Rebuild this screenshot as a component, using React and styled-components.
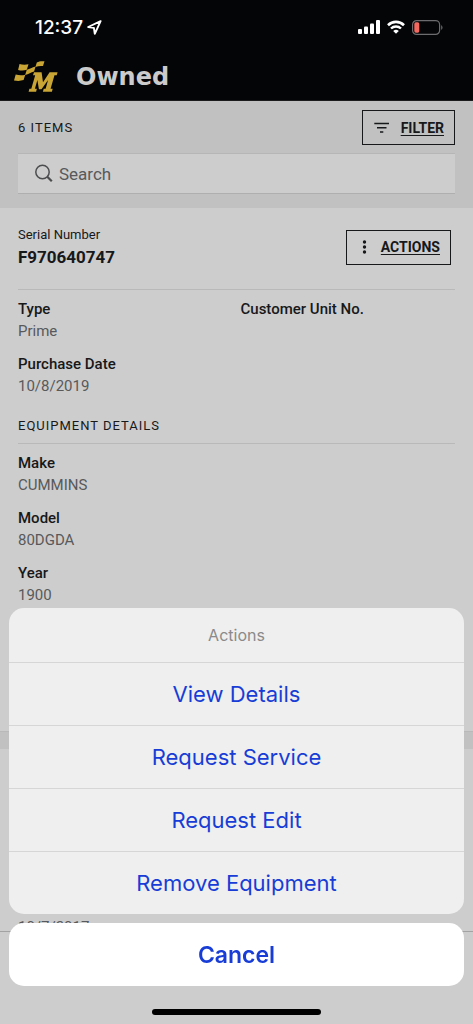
import styled, { createGlobalStyle } from "styled-components";

import React from "react";

const GlobalStyle = createGlobalStyle`
  *, *::before, *::after {
    box-sizing: border-box;
  }
  body {
    margin: 0;
    background-color: #cdcdcd;
    color: #17181a;
    font-family: Roboto, "Liberation Sans", sans-serif;
  }
  button, input {
    font-family: inherit;
    color: inherit;
  }
`;

const Screen = styled.div`
  height: 100vh;
  display: flex;
  flex-direction: column;
  overflow: hidden;
`;

const Header = styled.header`
  flex: none;
  background-color: #040507;
  border-bottom: 1px solid #1b1b1d;
`;

const StatusBar = styled.div`
  display: flex;
  justify-content: space-between;
  align-items: center;
  height: 54px;
  padding: 0 30px 0 35px;
  color: white;
`;

const Clock = styled.div`
  display: flex;
  align-items: center;
  gap: 4px;
  font-family: Inter, sans-serif;
  font-size: 19px;
  font-weight: 500;
`;

const Indicators = styled.div`
  display: flex;
  align-items: center;
  gap: 7px;
`;

const TitleBar = styled.div`
  display: flex;
  align-items: center;
  gap: 18px;
  height: 46px;
  padding: 0 14px;
`;

const PageTitle = styled.h1`
  margin: 0;
  color: #cbcbcb;
  font-family: "DejaVu Sans", sans-serif;
  font-size: 24px;
  font-weight: bold;
  line-height: 24px;
`;

const Content = styled.main`
  flex: 1;
  min-height: 0;
  overflow: hidden;
`;

const Toolbar = styled.section`
  background-color: #c1c1c1;
  padding: 9px 18px 14px;
`;

const ToolbarRow = styled.div`
  display: flex;
  justify-content: space-between;
  align-items: center;
  margin-bottom: 8px;
`;

const Caption = styled.h2`
  margin: 0;
  font-size: 13px;
  font-weight: 400;
  line-height: 20px;
  letter-spacing: 1px;
`;

const OutlineButton = styled.button`
  display: flex;
  align-items: center;
  height: 35px;
  padding: 0 10px;
  gap: 12px;
  background: none;
  border: 1px solid #17181a;
  border-radius: 0;
  font-size: 14px;
  font-weight: 700;
  text-decoration: underline;
  text-underline-offset: 2px;
`;

const SearchBox = styled.label`
  display: flex;
  align-items: center;
  gap: 5px;
  height: 41px;
  padding: 0 16px;
  background-color: #cdcdcd;
  border-top: 1px solid #b6b6b6;
  border-bottom: 1px solid #afafaf;
`;

const SearchInput = styled.input`
  flex: 1;
  min-width: 0;
  padding: 0;
  background: none;
  border: none;
  font-size: 17px;
  &::placeholder {
    color: #58595b;
    opacity: 1;
  }
`;

const Card = styled.article`
  min-height: 523px;
  padding: 16px 18px 0;
`;

const Divider = styled.div`
  height: 18px;
  background-color: #c1c1c1;
  border-top: 1px solid #b9b9b9;
`;

const CardHeader = styled.div`
  display: flex;
  justify-content: space-between;
  align-items: center;
  padding: 1px 4px 20px 0;
  border-bottom: 1px solid #b9b9b9;
`;

const SerialLabel = styled.div`
  font-size: 13px;
  line-height: 20px;
`;

const SerialNumber = styled.div`
  min-height: 24px;
  font-size: 17px;
  font-weight: 700;
  line-height: 24px;
`;

const FieldGrid = styled.dl`
  display: grid;
  grid-template-columns: 1fr 1fr;
  column-gap: 8px;
  row-gap: 11px;
  margin: 0;
  padding: 8px 0 19px;
`;

const Field = styled.div`
  grid-column: ${(props) => props.$column};
`;

const FieldName = styled.dt`
  font-size: 15px;
  font-weight: 500;
  line-height: 22px;
`;

const FieldValue = styled.dd`
  margin: 0;
  color: #58595b;
  font-size: 15px;
  line-height: 22px;
`;

const SectionTitle = styled.div`
  padding-bottom: 7px;
  border-bottom: 1px solid #b9b9b9;
`;

const TabBar = styled.footer`
  flex: none;
  height: 93px;
  border-top: 1px solid #a3a3a3;
`;

const SheetLayer = styled.div`
  position: fixed;
  left: 0;
  right: 0;
  bottom: 0;
  padding: 0 9px 9px;
  font-family: Inter, "Liberation Sans", sans-serif;
`;

const Sheet = styled.div`
  overflow: hidden;
  margin-bottom: 9px;
  border-radius: 15px;
  background-color: #efefef;
`;

const SheetTitle = styled.h2`
  margin: 0;
  color: #8a8a8a;
  font-size: 16px;
  font-weight: 400;
  line-height: 54px;
  text-align: center;
`;

const SheetButton = styled.button`
  display: block;
  width: 100%;
  height: 63px;
  padding: 0;
  background-color: ${(props) => (props.$cancel ? "white" : "transparent")};
  border: none;
  border-top: ${(props) => (props.$cancel ? "none" : "1px solid #d6d6d6")};
  border-radius: ${(props) => (props.$cancel ? "15px" : "0")};
  color: #173dd6;
  font-size: ${(props) => (props.$cancel ? "23px" : "22px")};
  font-weight: ${(props) => (props.$cancel ? 600 : 400)};
`;

const HomeIndicator = styled.div`
  width: 169px;
  height: 6px;
  margin: 23px auto 0;
  border-radius: 3px;
  background-color: black;
`;

function LocationIcon() {
  return (
    <svg width="15" height="15" viewBox="0 0 15 15" fill="none">
      <path
        d="M13.6 1.2 1.2 7l5.7.9.9 5.9Z"
        stroke="white"
        strokeWidth="1.9"
        strokeLinejoin="round"
      />
    </svg>
  );
}

function SignalIcon() {
  return (
    <svg width="22" height="14" viewBox="0 0 22 14" fill="white">
      <rect x="0" y="9" width="4" height="5" rx="1" />
      <rect x="6" y="6.5" width="4" height="7.5" rx="1" />
      <rect x="12" y="3.5" width="4" height="10.5" rx="1" />
      <rect x="18" y="0" width="4" height="14" rx="1" />
    </svg>
  );
}

function WifiIcon() {
  return (
    <svg width="18" height="14" viewBox="0 0 18 14" fill="none">
      <path d="M1 5.200a11.400 11.400 0 0 1 16 0" stroke="white" strokeWidth="2.600" />
      <path d="M4 8.500a7.100 7.100 0 0 1 10 0" stroke="white" strokeWidth="2.400" />
      <path d="M9 13.800 6.200 11a4 4 0 0 1 5.600 0Z" fill="white" />
    </svg>
  );
}

function BatteryIcon() {
  return (
    <svg width="31" height="15" viewBox="0 0 31 15" fill="none">
      <rect x=".6" y=".6" width="27" height="13.8" rx="4" stroke="#6c6c6e" strokeWidth="1.2" />
      <path d="M29.2 5.2c1.7.7 1.7 3.9 0 4.6Z" fill="#6c6c6e" />
      <rect x="2.3" y="2.3" width="5" height="10.4" rx="1.6" fill="#f2695f" />
    </svg>
  );
}

// checkered flag (four wavy squares) over the slab M
function Logo() {
  return (
    <svg width="44" height="32" viewBox="0 0 44 32" fill="#c9a535">
      <path d="M5.500 3c3 .9 6 .9 9 .3L12.800 8.800c-3 .9-5.800.9-8.700.1Z" />
      <path d="M12.800 8.800C15.800 8.300 18 6.500 21.600 5.600l-1.500 4.900c-3.200.9-5.400 2.700-9 3.500Z" />
      <path d="M22.800 1.400C25.400 0 28 0 30.500.3L29 5c-2.500-.3-5-.1-7.600 1.100Z" />
      <path d="M1.700 13.500c3.200.9 6.400 1 9.600.2l-1.700 5.400c-3.200 1-6.400 1-9.600.3Z" />
      <path d="M20 11.200h7.600l1.400 10L35.600 11.200H43.600l-.9 3h-2.200l-3.900 13.500h2.100l-.8 3h-9l.8-3h1.900l2.500-8.700-6.600 9.300h-2.600l-1.500-9.400-2.500 8.800h2l-.8 3h-7.500l.8-3h1.900l3.900-13.500H19Z" />
    </svg>
  );
}

function SearchIcon() {
  return (
    <svg width="20" height="20" viewBox="0 0 20 20" fill="none" stroke="#4c4d4f">
      <circle cx="8.500" cy="8" r="6.700" strokeWidth="1.500" />
      <path d="m13.300 12.800 4.500 4.500" strokeWidth="2.200" />
    </svg>
  );
}

function FilterIcon() {
  return (
    <svg width="16" height="12" viewBox="0 0 16 12" stroke="#17181a" strokeWidth="1.500">
      <path d="M1.300 1.500H16M4 5.700h9.500M7 9.900h3.300" />
    </svg>
  );
}

function DotsIcon() {
  return (
    <svg width="12" height="14" viewBox="0 0 12 14" fill="#17181a">
      <circle cx="7.500" cy="2" r="1.700" />
      <circle cx="7.500" cy="7" r="1.700" />
      <circle cx="7.500" cy="12" r="1.700" />
    </svg>
  );
}

function EquipmentCard({ item }) {
  return (
    <Card>
      <CardHeader>
        <div>
          <SerialLabel>Serial Number</SerialLabel>
          <SerialNumber>{item.serial}</SerialNumber>
        </div>
        <OutlineButton type="button">
          <DotsIcon />
          ACTIONS
        </OutlineButton>
      </CardHeader>
      <FieldGrid>
        <Field>
          <FieldName>Type</FieldName>
          <FieldValue>Prime</FieldValue>
        </Field>
        <Field>
          <FieldName>Customer Unit No.</FieldName>
        </Field>
        <Field>
          <FieldName>Purchase Date</FieldName>
          <FieldValue>{item.purchased}</FieldValue>
        </Field>
      </FieldGrid>
      {item.details && (
        <>
          <SectionTitle>
            <Caption as="h3">EQUIPMENT DETAILS</Caption>
          </SectionTitle>
          <FieldGrid>
            {item.details.map(([name, value]) => (
              <Field key={name} $column="1">
                <FieldName>{name}</FieldName>
                <FieldValue>{value}</FieldValue>
              </Field>
            ))}
          </FieldGrid>
        </>
      )}
    </Card>
  );
}

const items = [
  {
    serial: "F970640747",
    purchased: "10/8/2019",
    details: [
      ["Make", "CUMMINS"],
      ["Model", "80DGDA"],
      ["Year", "1900"],
    ],
  },
  { serial: "", purchased: "10/7/2017" },
];

const actions = ["View Details", "Request Service", "Request Edit", "Remove Equipment"];

export default function App() {
  return (
    <Screen>
      <GlobalStyle />
      <Header>
        <StatusBar>
          <Clock>
            12:37
            <LocationIcon />
          </Clock>
          <Indicators>
            <SignalIcon />
            <WifiIcon />
            <BatteryIcon />
          </Indicators>
        </StatusBar>
        <TitleBar>
          <Logo />
          <PageTitle>Owned</PageTitle>
        </TitleBar>
      </Header>
      <Content>
        <Toolbar>
          <ToolbarRow>
            <Caption>6 ITEMS</Caption>
            <OutlineButton type="button">
              <FilterIcon />
              FILTER
            </OutlineButton>
          </ToolbarRow>
          <SearchBox>
            <SearchIcon />
            <SearchInput type="text" placeholder="Search" aria-label="Search" />
          </SearchBox>
        </Toolbar>
        <EquipmentCard item={items[0]} />
        <Divider />
        <EquipmentCard item={items[1]} />
      </Content>
      <TabBar />
      <SheetLayer role="dialog" aria-label="Actions">
        <Sheet>
          <SheetTitle>Actions</SheetTitle>
          {actions.map((action) => (
            <SheetButton type="button" key={action}>
              {action}
            </SheetButton>
          ))}
        </Sheet>
        <SheetButton type="button" $cancel>
          Cancel
        </SheetButton>
        <HomeIndicator />
      </SheetLayer>
    </Screen>
  );
}
